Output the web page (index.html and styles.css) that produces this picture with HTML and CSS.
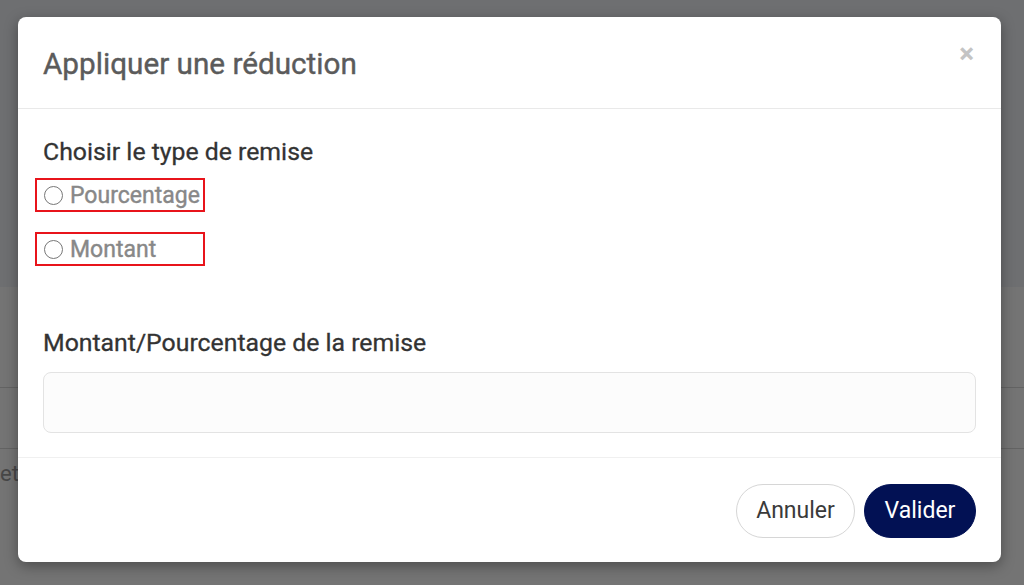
FILE: index.html
```html
<!DOCTYPE html>
<html lang="fr">
<head>
<meta charset="utf-8">
<link rel="stylesheet" href="styles.css">
</head>
<body>
<div class="backdrop">
  <div class="bg-top"></div>
  <div class="bg-line l1"></div>
  <div class="bg-line l2"></div>
  <div class="bg-text">etat</div>
  <div class="modal">
    <div class="modal-header">
      <h2 class="modal-title">Appliquer une réduction</h2>
      <span class="close">&times;</span>
    </div>
    <div class="modal-body">
      <div class="label">Choisir le type de remise</div>
      <label class="radio-opt first"><span class="radio"></span><span class="radio-text">Pourcentage</span></label>
      <label class="radio-opt"><span class="radio"></span><span class="radio-text">Montant</span></label>
      <div class="label amount">Montant/Pourcentage de la remise</div>
      <div class="input"></div>
    </div>
    <div class="modal-footer">
      <button class="btn btn-cancel">Annuler</button>
      <button class="btn btn-ok">Valider</button>
    </div>
  </div>
</div>
</body>
</html>
```
FILE: styles.css
```css
* { box-sizing: border-box; }
html, body { margin: 0; padding: 0; }
body {
  width: 1024px;
  height: 585px;
  overflow: hidden;
  font-family: Roboto, "Liberation Sans", sans-serif;
  background: #737373;
}
.backdrop {
  position: relative;
  width: 1024px;
  height: 585px;
  background: #747474;
  padding: 17px 0 0 18px;
}
.bg-top {
  position: absolute;
  left: 0;
  right: 0;
  top: 0;
  height: 287px;
  background: #6e6f71;
}
.bg-line {
  position: absolute;
  left: 0;
  right: 0;
  height: 1px;
  background: #636363;
}
.bg-line.l1 { top: 387px; }
.bg-line.l2 { top: 448px; }
.bg-text {
  position: absolute;
  left: 0;
  top: 461px;
  font-size: 22px;
  color: #474747;
}
.modal {
  position: relative;
  width: 983px;
  height: 545px;
  background: #fff;
  border-radius: 8px;
  box-shadow: 0 4px 14px rgba(0,0,0,0.35);
  display: flex;
  flex-direction: column;
}
.modal-header {
  height: 92px;
  border-bottom: 1px solid #e9e9e9;
  display: flex;
  align-items: center;
  justify-content: space-between;
  padding: 0 25px 0 25px;
}
.modal-title {
  margin: 0;
  font-size: 29.7px;
  font-weight: 400;
  color: #5b5b5b;
  padding-top: 1px;
  -webkit-text-stroke: 0.4px #5b5b5b;
}
.close {
  font-size: 28px;
  font-weight: 700;
  color: #c4c4c4;
  line-height: 1;
  margin-top: -18px;
  margin-right: 2px;
}
.modal-body {
  height: 349px;
  border-bottom: 1px solid #f0f0f0;
  padding: 28px 25px 0 25px;
}
.label {
  font-size: 24.8px;
  font-weight: 400;
  color: #333;
  line-height: 30px;
  -webkit-text-stroke: 0.3px #333;
}
.radio-opt {
  display: flex;
  align-items: center;
  width: 170px;
  height: 34px;
  margin-left: -8px;
  border: 2px solid #e8141b;
  padding-left: 7px;
  gap: 7px;
}
.radio-opt.first { margin-top: 11px; margin-bottom: 20px; }
.radio {
  width: 19px;
  height: 19px;
  border: 1.5px solid #777;
  border-radius: 50%;
}
.radio-text {
  font-size: 23px;
  font-weight: 400;
  color: #888;
  -webkit-text-stroke: 0.4px #888;
}
.label.amount { margin-top: 62px; }
.input {
  margin-top: 14px;
  width: 933px;
  height: 61px;
  border: 1px solid #e3e3e3;
  border-radius: 8px;
  background: #fcfcfc;
}
.modal-footer {
  flex: 1;
  display: flex;
  justify-content: flex-end;
  align-items: center;
  gap: 9px;
  padding: 1px 25px 0 0;
}
.btn {
  height: 54px;
  border-radius: 27px;
  font-family: Roboto, "Liberation Sans", sans-serif;
  font-size: 23px;
  padding: 0;
  cursor: pointer;
}
.btn-cancel {
  width: 119px;
  background: #fff;
  border: 1px solid #d6d6d6;
  color: #3a3a3a;
}
.btn-ok {
  width: 112px;
  background: #021154;
  border: 1px solid #021154;
  color: #fff;
}
```
